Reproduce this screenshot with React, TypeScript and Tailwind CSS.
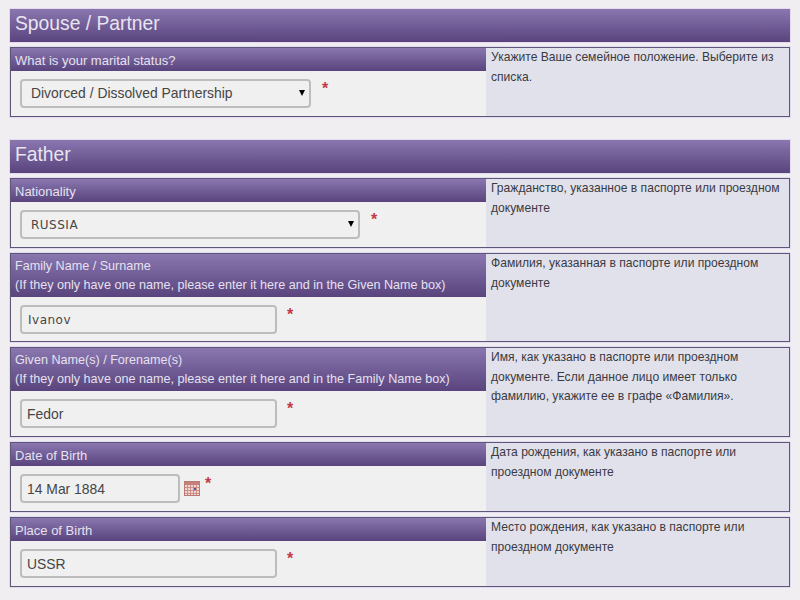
import React from "react";

type Row = {
  label: string[];
  help: string[];
  value: string;
  kind: "select" | "input" | "date";
  width: string;
  height: string;
  mono?: boolean;
};

const spouse: Row[] = [
  {
    label: ["What is your marital status?"],
    help: ["Укажите Ваше семейное положение. Выберите из", "списка."],
    value: "Divorced / Dissolved Partnership",
    kind: "select",
    width: "w-[291px]",
    height: "h-[70px]",
  },
];

const father: Row[] = [
  {
    label: ["Nationality"],
    help: ["Гражданство, указанное в паспорте или проездном", "документе"],
    value: "RUSSIA",
    kind: "select",
    width: "w-[340px]",
    height: "h-[70px]",
    mono: true,
  },
  {
    label: [
      "Family Name / Surname",
      "(If they only have one name, please enter it here and in the Given Name box)",
    ],
    help: ["Фамилия, указанная в паспорте или проездном", "документе"],
    value: "Ivanov",
    kind: "input",
    width: "w-[257px]",
    height: "h-[89px]",
    mono: true,
  },
  {
    label: [
      "Given Name(s) / Forename(s)",
      "(If they only have one name, please enter it here and in the Family Name box)",
    ],
    help: [
      "Имя, как указано в паспорте или проездном",
      "документе. Если данное лицо имеет только",
      "фамилию, укажите ее в графе «Фамилия».",
    ],
    value: "Fedor",
    kind: "input",
    width: "w-[257px]",
    height: "h-[90px]",
  },
  {
    label: ["Date of Birth"],
    help: ["Дата рождения, как указано в паспорте или", "проездном документе"],
    value: "14 Mar 1884",
    kind: "date",
    width: "w-[160px]",
    height: "h-[70px]",
  },
  {
    label: ["Place of Birth"],
    help: ["Место рождения, как указано в паспорте или", "проездном документе"],
    value: "USSR",
    kind: "input",
    width: "w-[257px]",
    height: "h-[70px]",
  },
];

const CalendarIcon = () => (
  <svg width="16" height="15" viewBox="0 0 16 15" className="ml-[4px] mt-[7px] shrink-0">
    <rect x="0" y="0" width="16" height="15" fill="#f0d6d3" />
    <rect x="0" y="1" width="16" height="3" fill="#c4817b" />
    <path d="M1 0v1M3 0v1M5 0v1M7 0v1M9 0v1M11 0v1M13 0v1M15 0v1" stroke="#b5665f" />
    <path d="M0 6.5h16M0 9.5h16M0 12.5h16M3.5 4v11M6.5 4v11M9.5 4v11M12.5 4v11" stroke="#cf8f89" />
    <rect x="10" y="7" width="2" height="2" fill="#5a5aa8" />
    <rect x="0.5" y="0.5" width="15" height="14" fill="none" stroke="#bb7a74" />
  </svg>
);

const Star = ({ className }: { className: string }) => (
  <span className={`text-[16px] font-bold leading-none text-[#c23a48] ${className}`}>*</span>
);

const Field = ({ row }: { row: Row }) => {
  const font = row.mono
    ? "font-['DejaVu_Sans'] text-[12px] tracking-[0.5px]"
    : "text-[13.9px]";
  const box = `${row.width} h-[29px] rounded-[4px] border-2 border-[#bdbdbd] bg-[#f0f0f0] text-[#464646] outline-none ${font}`;

  if (row.kind === "select") {
    return (
      <div className="flex items-start">
        <div className={`relative ${row.width}`}>
          <select defaultValue={row.value} className={`${box} appearance-none pl-[9px]`}>
            <option>{row.value}</option>
          </select>
          <span className="absolute right-[6px] top-[11px] h-0 w-0 border-x-[3px] border-t-[6px] border-x-transparent border-t-black" />
        </div>
        <Star className="ml-[11px] mt-[2px]" />
      </div>
    );
  }

  return (
    <div className="flex items-start">
      <input
        readOnly
        value={row.value}
        className={`${box} ${row.mono ? "px-[6px]" : "px-[5px]"}`}
      />
      {row.kind === "date" ? <CalendarIcon /> : null}
      <Star className={row.kind === "date" ? "ml-[5px] mt-[2px]" : "ml-[10px] mt-[2px]"} />
    </div>
  );
};

const FormRow = ({ row }: { row: Row }) => {
  const double = row.label.length > 1;
  return (
    <div className={`flex ${row.height} border border-[#5d5678] bg-[#f0f0f0] ring-1 ring-[#e2daf0]`}>
      <div className="w-[475px] shrink-0">
        <div
          className={`bg-gradient-to-b from-[#8b77b0] to-[#59447e] pl-[4px] pt-[3px] leading-[19px] text-[#e6e1ef] ${
            double ? "h-[43px] text-[12.6px]" : "h-[23px] text-[13px]"
          }`}
        >
          {row.label.map((line) => (
            <div key={line} className="whitespace-nowrap">
              {line}
            </div>
          ))}
        </div>
        <div className="pl-[9px] pt-[8px]">
          <Field row={row} />
        </div>
      </div>
      <div className="flex-1 bg-[#e1e1ec] pl-[5px] text-[12.1px] leading-[19.5px] text-[#3a3a42]">
        {row.help.map((line) => (
          <div key={line} className="whitespace-nowrap">
            {line}
          </div>
        ))}
      </div>
    </div>
  );
};

const Section = ({ title, rows }: { title: string; rows: Row[] }) => (
  <section className="flex flex-col gap-[5px]">
    <h2 className="h-[33px] bg-gradient-to-b from-[#8b77b0] to-[#59447e] pl-[5px] text-[19.3px] leading-[29px] text-[#e8e4f0] ring-1 ring-[#e2daf0]">
      {title}
    </h2>
    {rows.map((row) => (
      <FormRow key={row.label[0]} row={row} />
    ))}
  </section>
);

export default function App() {
  return (
    <div className="h-[600px] w-[800px] overflow-hidden bg-[#f0eef0] px-[10px] pt-[9px] font-['Liberation_Sans',Arial,sans-serif]">
      <div className="flex flex-col gap-[23px]">
        <Section title="Spouse / Partner" rows={spouse} />
        <Section title="Father" rows={father} />
      </div>
    </div>
  );
}
